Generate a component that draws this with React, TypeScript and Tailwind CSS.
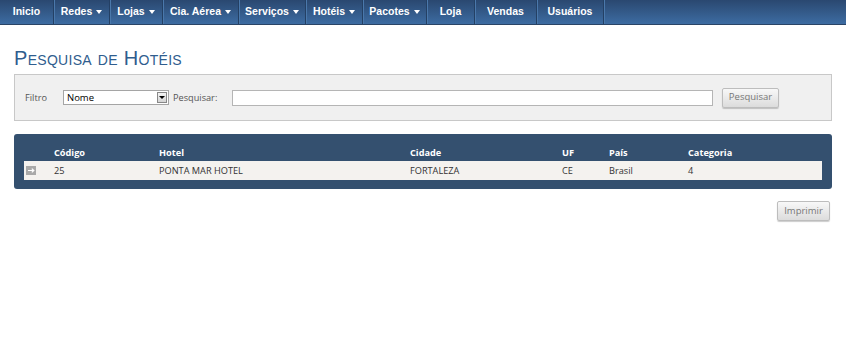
import { useState } from "react";

const menu = [
  { label: "Inicio", w: 54, drop: false },
  { label: "Redes", w: 56, drop: true },
  { label: "Lojas", w: 53, drop: true },
  { label: "Cia. Aérea", w: 76, drop: true },
  { label: "Serviços", w: 67, drop: true },
  { label: "Hotéis", w: 57, drop: true },
  { label: "Pacotes", w: 64, drop: true },
  { label: "Loja", w: 48, drop: false },
  { label: "Vendas", w: 62, drop: false },
  { label: "Usuários", w: 67, drop: false },
];

const cols = [
  { key: "codigo", label: "Código", w: "w-[105px]" },
  { key: "hotel", label: "Hotel", w: "w-[251px]" },
  { key: "cidade", label: "Cidade", w: "w-[152px]" },
  { key: "uf", label: "UF", w: "w-[47px]" },
  { key: "pais", label: "País", w: "w-[79px]" },
  { key: "cat", label: "Categoria", w: "flex-1" },
];

const hotels = [
  { codigo: "25", hotel: "PONTA MAR HOTEL", cidade: "FORTALEZA", uf: "CE", pais: "Brasil", cat: "4" },
];

function Caret() {
  return <span className="ml-[4px] inline-block h-0 w-0 border-x-[3.5px] border-t-[4px] border-x-transparent border-t-white align-middle" />;
}

export default function App() {
  const [filtro, setFiltro] = useState("Nome");
  const [busca, setBusca] = useState("");

  return (
    <div className="min-h-[344px] bg-white font-['Open_Sans',sans-serif] text-[9.2px] text-[#333]">
      <nav className="flex h-[25px] border-b border-[#2a4466] bg-gradient-to-b from-[#2a4870] to-[#3d6ca2] font-['Liberation_Sans',Arial,sans-serif] text-[10.5px] font-bold text-white">
        {menu.map((m) => (
          <div
            key={m.label}
            style={{ width: m.w }}
            className="flex shrink-0 items-center justify-center border-r border-[#244064] shadow-[1px_0_0_#4a78ab]"
          >
            {m.label}
            {m.drop && <Caret />}
          </div>
        ))}
      </nav>

      <div className="px-[14px]">
        <h1 className="mt-[21px] font-['Liberation_Sans',Arial,sans-serif] text-[20px] leading-[24px] tracking-[0.3px] text-[#2f5d8e] [font-variant:small-caps]">
          Pesquisa de Hotéis
        </h1>

        <div className="mt-[4px] flex h-[47px] items-center border border-[#c8c8c8] bg-[#f0f0f0] pl-[10px] text-[#555]">
          <span className="w-[38px]">Filtro</span>
          <div className="flex h-[15px] w-[106px] items-center border border-[#a5a5a5] bg-white">
            <select
              value={filtro}
              onChange={(e) => setFiltro(e.target.value)}
              className="h-full flex-1 appearance-none bg-transparent pl-[3px] text-[9.5px] text-black outline-none"
            >
              <option>Nome</option>
              <option>Cidade</option>
              <option>Código</option>
            </select>
            <span className="mr-[1px] flex h-[11px] w-[10px] items-center justify-center border border-[#888] bg-gradient-to-b from-[#f4f4f4] to-[#d4d4d4]">
              <span className="h-0 w-0 border-x-[3px] border-t-[3px] border-x-transparent border-t-black" />
            </span>
          </div>
          <span className="ml-[4px] w-[59px]">Pesquisar:</span>
          <input
            value={busca}
            onChange={(e) => setBusca(e.target.value)}
            className="h-[16px] w-[481px] border border-[#b5b5b5] bg-white outline-none"
          />
          <button className="ml-[9px] h-[20px] w-[57px] rounded-[2px] border border-[#bdbdbd] bg-gradient-to-b from-[#f8f8f8] to-[#dcdcdc] text-[9.5px] text-[#777] shadow-[0_1px_1px_rgba(0,0,0,0.2)]">
            Pesquisar
          </button>
        </div>

        <div className="mt-[13px] rounded-[3px] bg-[#34506f] px-[10px] pb-[9px] pt-[11px]">
          <div className="flex h-[16px] items-center pl-[30px] font-bold text-white">
            {cols.map((c) => (
              <span key={c.key} className={c.w}>
                {c.label}
              </span>
            ))}
          </div>
          {hotels.map((h) => (
            <div key={h.codigo} className="flex h-[19px] items-center bg-[#f4f2ef] text-[#333]">
              <span className="flex w-[30px] justify-start pl-[2px]">
                <span className="flex h-[9px] w-[10px] items-center justify-center bg-[#a9a9a9]">
                  <svg width="7" height="5" viewBox="0 0 7 5">
                    <path d="M0 2.5h5.5M3.8 0.6l2 1.9-2 1.9" stroke="white" strokeWidth="1.2" fill="none" />
                  </svg>
                </span>
              </span>
              {cols.map((c) => (
                <span key={c.key} className={c.w}>
                  {h[c.key as keyof typeof h]}
                </span>
              ))}
            </div>
          ))}
        </div>

        <div className="mt-[12px] flex justify-end pr-[2px]">
          <button className="h-[20px] w-[53px] rounded-[2px] border border-[#bdbdbd] bg-gradient-to-b from-[#f8f8f8] to-[#dcdcdc] text-[9.5px] text-[#777] shadow-[0_1px_1px_rgba(0,0,0,0.2)]">
            Imprimir
          </button>
        </div>
      </div>
    </div>
  );
}
